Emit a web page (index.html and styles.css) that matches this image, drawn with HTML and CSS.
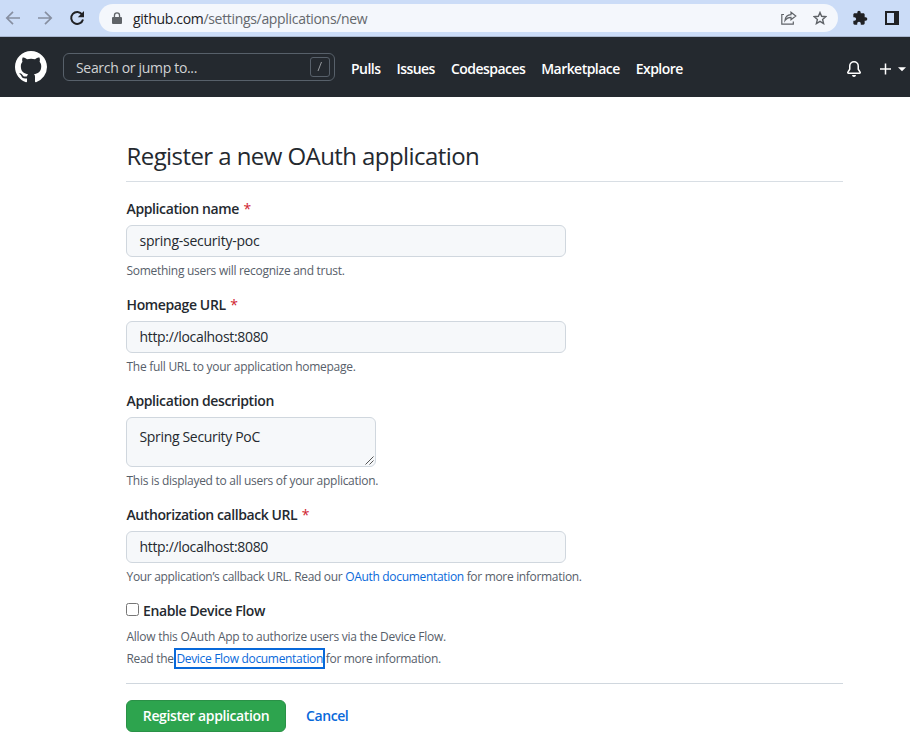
FILE: index.html
```
<!DOCTYPE html>
<html lang="en">
<head>
<meta charset="utf-8">
<title>Register a new OAuth application</title>
<link rel="stylesheet" href="styles.css">
</head>
<body>
<div class="browser-bar">
  <svg class="nav-icon muted" width="16" height="16" viewBox="0 0 16 16"><path d="M15 8H2M8 1.8 1.8 8 8 14.2"/></svg>
  <svg class="nav-icon muted" width="16" height="16" viewBox="0 0 16 16"><path d="M1 8h13M8 1.8 14.2 8 8 14.2"/></svg>
  <svg class="nav-icon reload" width="16" height="16" viewBox="0 0 16 16"><path d="M13.2 4.6A6 6 0 1 0 14 9.5"/><path class="solid" d="M15 1v6.2H8.8z"/></svg>
  <div class="address">
    <svg class="lock" width="10" height="13" viewBox="0 0 10 13"><path fill="#5f6368" fill-rule="evenodd" d="M1 5h.8V3.5a3.2 3.2 0 0 1 6.4 0V5H9q1 0 1 1v5q0 1-1 1H1q-1 0-1-1V6q0-1 1-1zm2.1 0h3.8V3.5a1.9 1.9 0 0 0-3.8 0z"/></svg>
    <span class="url"><b>github.com</b>/settings/applications/new</span>
    <svg class="share" width="16" height="14" viewBox="0 0 16 14"><path d="M3 3.5H.8v9.7h11.5v-2.7M4 9.5c.3-3.8 2.5-5.7 6-5.8V1.2L14.8 5 10 8.8V6.4C7.4 6.4 5.5 7.3 4 9.5z"/></svg>
    <svg class="star" width="14" height="14" viewBox="0 0 14 14"><path d="m7 1.5 1.600 3.800 4.200.4-3.200 2.800 1 4.100L7 10.400l-3.600 2.200 1-4.100L1.200 5.700l4.200-.4z"/></svg>
  </div>
  <svg class="puzzle" width="16" height="16" viewBox="0 0 24 24"><path fill="#202124" d="M20.500 11H19V7c0-1.100-.9-2-2-2h-4V3.500a2.500 2.500 0 0 0-5 0V5H4c-1.100 0-2 .9-2 2v3.800h1.500a2.700 2.700 0 0 1 0 5.400H2V20c0 1.100.9 2 2 2h3.800v-1.500a2.700 2.700 0 0 1 5.400 0V22H17c1.100 0 2-.9 2-2v-4h1.500a2.500 2.500 0 0 0 0-5z"/></svg>
  <svg class="panel" width="14" height="14" viewBox="0 0 14 14"><path fill="#202124" fill-rule="evenodd" d="M0 0h14v14H0zM2 2v10h7V2z"/></svg>
</div>
<header class="site-header">
  <svg class="logo" width="32" height="32" viewBox="0 0 16 16"><path fill="#fff" fill-rule="evenodd" d="M8 0C3.580 0 0 3.580 0 8c0 3.540 2.290 6.530 5.470 7.590.4.070.55-.17.55-.38 0-.19-.01-.82-.01-1.490-2.010.37-2.530-.49-2.690-.94-.09-.23-.48-.94-.82-1.130-.28-.15-.68-.52-.01-.53.63-.01 1.080.58 1.230.82.72 1.210 1.870.87 2.330.66.07-.52.28-.87.51-1.070-1.780-.2-3.640-.89-3.640-3.950 0-.87.31-1.590.82-2.150-.08-.2-.36-1.020.08-2.120 0 0 .67-.21 2.200.82.64-.18 1.320-.27 2-.27s1.360.09 2 .27c1.530-1.040 2.200-.82 2.200-.82.44 1.100.16 1.920.08 2.120.51.56.82 1.270.82 2.150 0 3.070-1.870 3.750-3.650 3.950.29.25.54.73.54 1.480 0 1.070-.01 1.930-.01 2.200 0 .21.15.46.55.38A8.010 8.010 0 0 0 16 8c0-4.420-3.580-8-8-8z"/></svg>
  <div class="search"><span>Search or jump to...</span><span class="slash"><svg width="18" height="18" viewBox="0 0 18 18"><path d="m7 13 3.500-9"/></svg></span></div>
  <nav class="links">
    <a>Pulls</a><a>Issues</a><a>Codespaces</a><a>Marketplace</a><a>Explore</a>
  </nav>
  <svg class="bell" width="16" height="16" viewBox="0 0 16 16"><path fill="#fff" d="M8 16a2 2 0 0 0 1.985-1.750c.017-.137-.097-.25-.235-.25h-3.500c-.138 0-.252.113-.235.250A2 2 0 0 0 8 16z"/><path fill="#fff" fill-rule="evenodd" d="M8 1.500A3.500 3.500 0 0 0 4.500 5v2.947c0 .346-.102.683-.294.970l-1.703 2.556a.18.018 0 0 0-.003.010l.001.006.004.006.006.004.007.001h10.964l.007-.001.006-.004.004-.006.001-.007a.17.017 0 0 0-.003-.010l-1.703-2.554a1.750 1.750 0 0 1-.294-.970V5A3.500 3.500 0 0 0 8 1.500zM3 5a5 5 0 0 1 10 0v2.947c0 .050.015.098.042.139l1.703 2.555A1.518 1.518 0 0 1 13.482 13H2.518a1.518 1.518 0 0 1-1.263-2.360l1.703-2.554A.25.250 0 0 0 3 7.947z"/></svg>
  <svg class="plus" width="28" height="12" viewBox="0 0 28 12"><path stroke="#fff" stroke-width="1.500" d="M0 6h11M5.500.5v11"/><path fill="#fff" d="M18 4.200h8l-4 4z"/></svg>
</header>
<main class="content">
  <h1>Register a new OAuth application</h1>
  <form>
    <div class="field">
      <label><span>Application name</span><i>*</i></label>
      <div class="input"><span class="slug">spring-security-poc</span></div>
      <p>Something users will recognize and trust.</p>
    </div>
    <div class="field">
      <label><span>Homepage URL</span><i>*</i></label>
      <div class="input"><span>http://localhost:8080</span></div>
      <p>The full URL to your application homepage.</p>
    </div>
    <div class="field area">
      <label><span>Application description</span></label>
      <div class="input textarea"><span>Spring Security PoC</span><svg class="grip" width="9" height="9" viewBox="0 0 9 9"><path d="M.5 8.500l8-8M4.500 8.500l4-4"/></svg></div>
      <p>This is displayed to all users of your application.</p>
    </div>
    <div class="field">
      <label><span class="callback">Authorization callback URL</span><i>*</i></label>
      <div class="input"><span>http://localhost:8080</span></div>
      <p class="callback-note">Your application’s callback URL. Read our <a>OAuth documentation</a> for more information.</p>
    </div>
    <div class="device">
      <label><span class="checkbox"></span><span>Enable Device Flow</span></label>
      <p class="flow">Allow this OAuth App to authorize users via the Device Flow.</p>
      <p>Read the <a class="focused">Device Flow documentation</a> for more information.</p>
    </div>
    <div class="actions">
      <button type="button">Register application</button>
      <a>Cancel</a>
    </div>
  </form>
</main>
</body>
</html>
```
FILE: styles.css
```
* { box-sizing: border-box; }
body { margin: 0; background: #fff; color: #24292f; font: 14px/21px "Open Sans", "Noto Sans", sans-serif; overflow: hidden; }
svg { display: block; flex: none; }
span { white-space: nowrap; }
h1, p { margin: 0; }
a { color: #0969da; }

.browser-bar { display: flex; align-items: center; height: 37px; padding: 0 11px 0 5px; background: #cbdcf7; border-bottom: 1px solid #a9b7cf; }
.nav-icon { margin-right: 16px; fill: none; stroke: #202124; stroke-width: 2; }
.muted { stroke: #878fa1; stroke-width: 1.7; }
.reload { margin-right: 14px; }
.reload .solid { fill: #202124; stroke: none; }
.address { display: flex; align-items: center; width: 739px; height: 28px; padding: 0 11px 0 13px; border-radius: 14px; background: #f4f7fc; }
.url { flex: 1; margin-left: 11px; color: #64686d; letter-spacing: -.32px; }
.url b { color: #202124; font-weight: 400; }
.share { margin-right: 16px; fill: none; stroke: #5f6368; stroke-width: 1.2; }
.star { fill: none; stroke: #5f6368; stroke-width: 1.4; }
.puzzle { margin-left: 14px; }
.panel { margin-left: auto; }

.site-header { display: flex; align-items: center; height: 60px; padding: 0 2px 0 15px; background: #24292f; }
.search { display: flex; align-items: center; justify-content: space-between; width: 272px; height: 28px; margin-left: 16px; padding: 0 4px 0 12px; border: 1px solid #57606a; border-radius: 6px; color: #d0d2d4; letter-spacing: -.32px; }
.slash { width: 20px; height: 20px; border: 1px solid #57606a; border-radius: 3px; }
.slash svg { fill: none; stroke: #969a9e; }
.links { display: flex; gap: 16px; margin: 2px 0 0 16px; }
.links a { color: #fff; font-weight: 600; letter-spacing: -.54px; white-space: nowrap; }
.bell { margin: 3px 18px 0 auto; }
.plus { margin-top: 3px; }

.content { width: 717px; margin: 46px 0 0 126px; }
h1 { height: 39px; padding-left: .5px; border-bottom: 1px solid #d8dee4; font-size: 24px; font-weight: 400; line-height: 26px; letter-spacing: -.57px; }
form { margin-top: 16px; }
.field { height: 96px; }
.area { height: 114px; }
label { display: flex; height: 27px; padding-left: .5px; font-weight: 600; letter-spacing: -.38px; }
label i { margin-left: 4.5px; color: #cf222e; font-style: normal; font-weight: 400; }
.callback { letter-spacing: -.42px; }
.input { display: flex; align-items: center; width: 440px; height: 32px; padding: 0 12.5px 1px; border: 1px solid #d0d7de; border-radius: 6px; background: #f6f8fa; letter-spacing: -.33px; }
.slug { letter-spacing: -.24px; }
.textarea { position: relative; align-items: flex-start; width: 250px; height: 50px; padding-top: 8px; }
.grip { position: absolute; right: 1px; bottom: 1px; fill: none; stroke: #555; stroke-width: 1; }
p { padding-left: .5px; color: #57606a; font-size: 12px; line-height: 18px; letter-spacing: -.28px; }
.field p { margin-top: 5px; }
.field .callback-note { letter-spacing: -.32px; }
.device { height: 84px; border-bottom: 1px solid #d0d7de; }
.checkbox { width: 13px; height: 13px; margin: 3px 4px 0 -.5px; border: 1px solid #767676; border-radius: 2.5px; background: #fff; }
.device label { height: 26px; }
.device p { line-height: 22px; letter-spacing: -.32px; }
.device .flow { letter-spacing: -.26px; }
.focused { outline: 2px solid #0969da; outline-offset: 0; }
.actions { display: flex; align-items: center; gap: 20px; margin-top: 16px; font-weight: 600; letter-spacing: -.42px; }
.actions a { padding-bottom: 1px; }
button { width: 160px; height: 32px; padding: 0 0 1px; border: 1px solid #2a9147; border-radius: 6px; background: #2da44e; color: #fff; font: inherit; letter-spacing: -.39px; }
```
